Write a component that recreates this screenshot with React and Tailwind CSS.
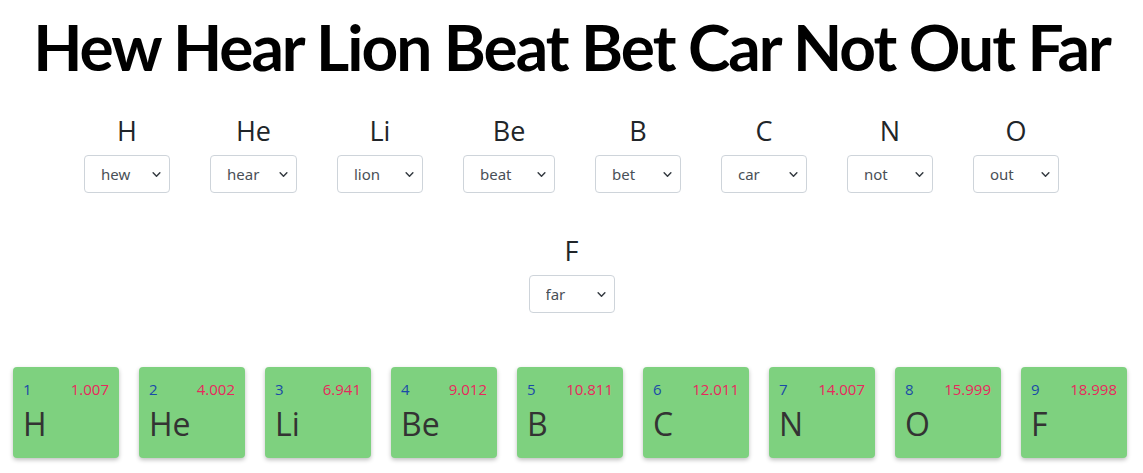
import React, { useState } from "react";

const elements = [
  { num: 1, symbol: "H", weight: "1.007", word: "hew", options: ["hew", "hue"], width: "w-[86px]" },
  { num: 2, symbol: "He", weight: "4.002", word: "hear", options: ["hear", "here"], width: "w-[87px]" },
  { num: 3, symbol: "Li", weight: "6.941", word: "lion", options: ["lion", "lie"], width: "w-[86px]" },
  { num: 4, symbol: "Be", weight: "9.012", word: "beat", options: ["beat", "bee"], width: "w-[92px]" },
  { num: 5, symbol: "B", weight: "10.811", word: "bet", options: ["bet", "bee"], width: "w-[86px]" },
  { num: 6, symbol: "C", weight: "12.011", word: "car", options: ["car", "see"], width: "w-[86px]" },
  { num: 7, symbol: "N", weight: "14.007", word: "not", options: ["not", "knot"], width: "w-[86px]" },
  { num: 8, symbol: "O", weight: "15.999", word: "out", options: ["out", "oh"], width: "w-[86px]" },
  { num: 9, symbol: "F", weight: "18.998", word: "far", options: ["far", "fee"], width: "w-[86px]" },
];

const capitalize = (s) => s.charAt(0).toUpperCase() + s.slice(1);

const WordPicker = ({ item, value, onChange }) => (
  <div className="flex flex-col items-center">
    <div className="text-[27px] leading-[36px] text-[#212529] mb-[6px]">{item.symbol}</div>
    <div className="relative">
      <select
        value={value}
        onChange={(e) => onChange(e.target.value)}
        className={`${item.width} appearance-none h-[38px] border border-[#ced4da] rounded-[4px] bg-white text-[15px] text-[#495057] pl-[16px] pr-[28px] outline-none font-['Noto_Sans',sans-serif]`}
      >
        {item.options.map((o) => (
          <option key={o} value={o}>
            {o}
          </option>
        ))}
      </select>
      <svg
        className="pointer-events-none absolute right-[9px] top-[16px]"
        width="9"
        height="7"
        viewBox="0 0 16 12"
      >
        <path d="M2 3l6 6 6-6" fill="none" stroke="#343a40" strokeWidth="2.6" strokeLinecap="round" strokeLinejoin="round" />
      </svg>
    </div>
  </div>
);

const ElementCard = ({ item }) => (
  <div className="w-[106px] h-[91px] bg-[#7ed17f] rounded-[4px] shadow-[0_2px_4px_rgba(0,0,0,0.25)] px-[10px] pt-[12px]">
    <div className="flex justify-between text-[15px] leading-[20px]">
      <span className="text-[#1a4aa8]">{item.num}</span>
      <span className="text-[#e8285d]">{item.weight}</span>
    </div>
    <div className="text-[32px] leading-[40px] text-[#333333] mt-[5px]">{item.symbol}</div>
  </div>
);

export default function App() {
  const [words, setWords] = useState(elements.map((e) => e.word));

  const setWord = (i, w) => {
    const next = [...words];
    next[i] = w;
    setWords(next);
  };

  return (
    <div className="w-[1143px] h-[473px] bg-white font-['Open_Sans','Noto_Sans',sans-serif] overflow-hidden">
      <h1 className="text-center whitespace-nowrap font-['Lato',sans-serif] font-bold text-[64px] leading-[80px] tracking-[-2px] pt-[7px] text-black">
        {words.map(capitalize).join(" ")}
      </h1>

      <div className="w-[1080px] mx-auto mt-[26px] flex flex-wrap justify-center gap-x-[40px] gap-y-[40px]">
        {elements.map((item, i) => (
          <WordPicker key={item.symbol} item={item} value={words[i]} onChange={(w) => setWord(i, w)} />
        ))}
      </div>

      <div className="flex justify-center gap-[20px] mt-[54px] pr-[3px]">
        {elements.map((item) => (
          <ElementCard key={item.symbol} item={item} />
        ))}
      </div>
    </div>
  );
}
